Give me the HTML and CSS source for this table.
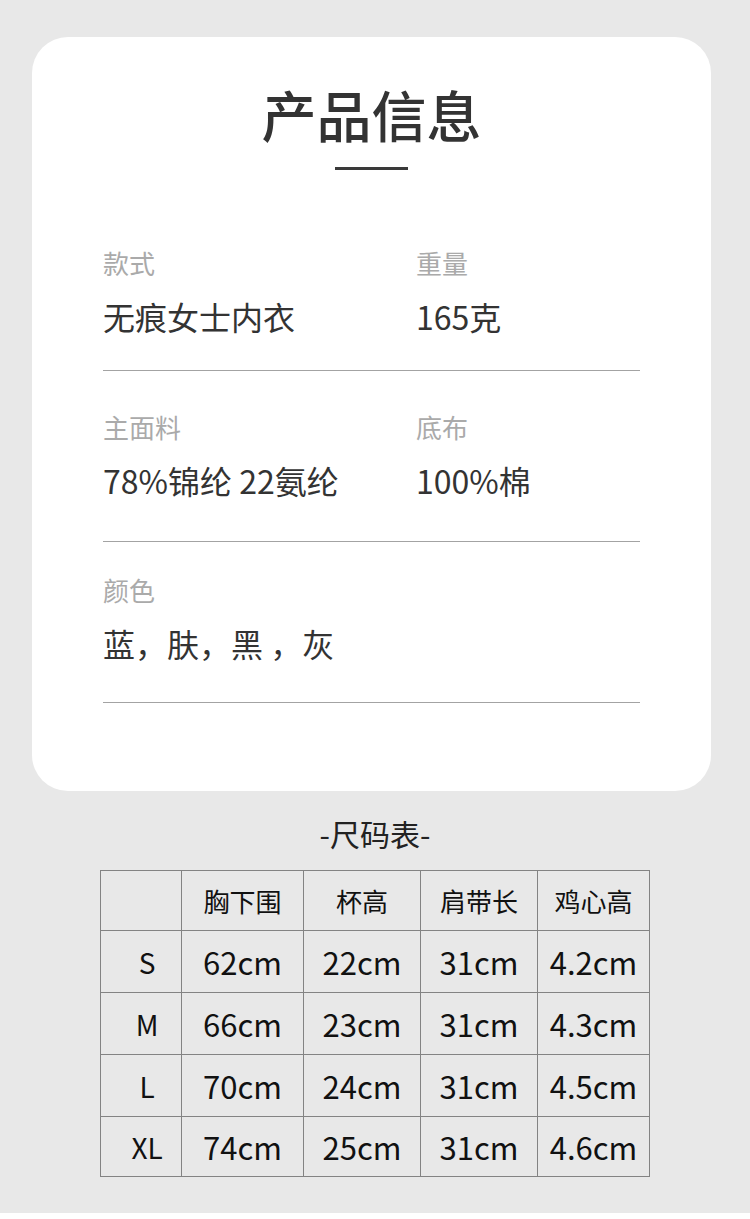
FILE: index.html
```html
<!DOCTYPE html>
<html lang="zh-CN">
<head>
<meta charset="utf-8">
<title>产品信息</title>
<link rel="stylesheet" href="styles.css">
</head>
<body>
<div class="page">
  <section class="card">
    <header class="card-head">
      <h1 class="title">产品信息</h1>
      <div class="title-bar"></div>
    </header>
    <div class="info-row info-row--first">
      <div class="info-cell">
        <div class="label">款式</div>
        <div class="value">无痕女士内衣</div>
      </div>
      <div class="info-cell">
        <div class="label">重量</div>
        <div class="value">165克</div>
      </div>
    </div>
    <div class="info-row info-row--mid">
      <div class="info-cell">
        <div class="label">主面料</div>
        <div class="value">78%锦纶 22氨纶</div>
      </div>
      <div class="info-cell">
        <div class="label">底布</div>
        <div class="value">100%棉</div>
      </div>
    </div>
    <div class="info-row info-row--last">
      <div class="info-cell">
        <div class="label">颜色</div>
        <div class="value">蓝，肤，黑 ，灰</div>
      </div>
    </div>
  </section>

  <section class="size">
    <h2 class="size-title">-尺码表-</h2>
    <table class="size-table">
      <colgroup>
        <col class="c1"><col class="c2"><col class="c3"><col class="c4"><col class="c5">
      </colgroup>
      <thead>
        <tr class="head-row">
          <th></th><th>胸下围</th><th>杯高</th><th>肩带长</th><th>鸡心高</th>
        </tr>
      </thead>
      <tbody>
        <tr><td class="sz">S</td><td>62cm</td><td>22cm</td><td>31cm</td><td>4.2cm</td></tr>
        <tr><td class="sz">M</td><td>66cm</td><td>23cm</td><td>31cm</td><td>4.3cm</td></tr>
        <tr><td class="sz">L</td><td>70cm</td><td>24cm</td><td>31cm</td><td>4.5cm</td></tr>
        <tr class="last-row"><td class="sz">XL</td><td>74cm</td><td>25cm</td><td>31cm</td><td>4.6cm</td></tr>
      </tbody>
    </table>
  </section>
  <div class="bottom-strip"></div>
</div>
</body>
</html>
```

FILE: styles.css
```css
* { box-sizing: border-box; }

html, body {
  margin: 0;
  padding: 0;
  background: #e8e8e8;
}

body {
  font-family: "Noto Sans CJK SC", "Noto Sans", sans-serif;
  color: #333;
}

.page {
  width: 750px;
  height: 1219px;
  display: flex;
  flex-direction: column;
  overflow: hidden;
}

.card {
  margin: 37px 39px 0 32px;
  width: 679px;
  height: 754px;
  background: #fff;
  border-radius: 36px;
  padding: 44px 71px 0 71px;
}

.card-head {
  display: flex;
  flex-direction: column;
  align-items: center;
  margin-bottom: 41px;
}

.title {
  margin: 0;
  font-size: 55px;
  line-height: 64px;
  font-weight: 500;
  color: #333;
  letter-spacing: 0;
}

.title-bar {
  margin-top: 22px;
  width: 73px;
  height: 3px;
  background: #3a3a3a;
}

.info-row {
  display: flex;
  border-bottom: 1px solid #a3a3a3;
}

.info-row--first { padding: 36px 0 34px 0; }
.info-row--mid   { padding: 40px 0 41px 0; }
.info-row--last  { padding: 32px 0 39px 0; }

.info-cell {
  display: flex;
  flex-direction: column;
  gap: 17px;
}

.info-cell:first-child {
  width: 313px;
  flex: none;
}

.label {
  font-size: 26px;
  line-height: 32px;
  color: #aaa;
}

.value {
  font-size: 32px;
  line-height: 40px;
  color: #333;
  white-space: pre;
}

.size {
  display: flex;
  flex-direction: column;
  align-items: flex-start;
}

.size-title {
  align-self: center;
  margin: 24px 0 19px 0;
  font-size: 30px;
  line-height: 36px;
  font-weight: 400;
  color: #222;
}

.size-table {
  margin-left: 100px;
  border-collapse: collapse;
  table-layout: fixed;
  width: 549px;
  color: #111;
}

.c1 { width: 81px; }
.c2 { width: 122px; }
.c3 { width: 117px; }
.c4 { width: 117px; }
.c5 { width: 112px; }

.size-table th,
.size-table td {
  border: 1px solid #838383;
  padding: 0;
  text-align: center;
  vertical-align: middle;
}

.size-table th {
  font-size: 26px;
  font-weight: 400;
  height: 60px;
}

.size-table td {
  font-size: 31px;
  height: 62px;
}

.size-table .last-row td {
  height: 60px;
}

.size-table td.sz {
  font-size: 28px;
  padding-left: 12px;
}

.bottom-strip {
  margin-top: auto;
  height: 6px;
  background: #fff;
}
```
